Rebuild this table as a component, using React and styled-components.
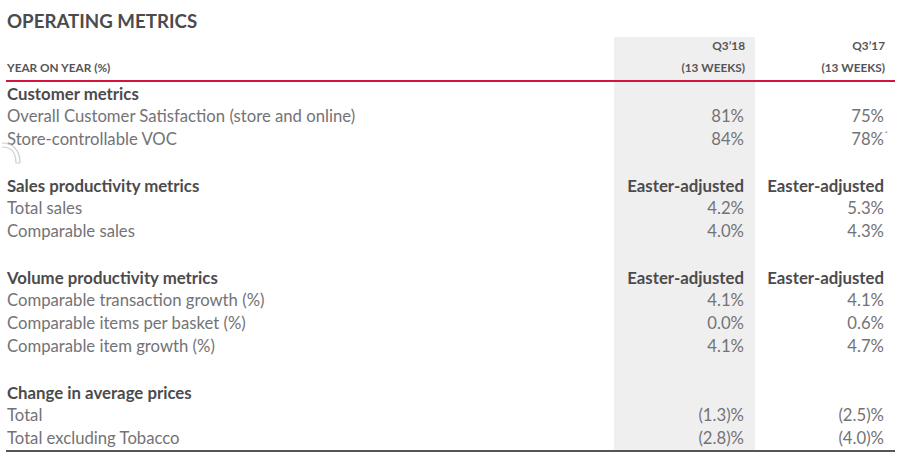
import React from 'react';
import styled, { createGlobalStyle } from 'styled-components';

const GlobalStyle = createGlobalStyle`
  html, body { margin: 0; padding: 0; background: #ffffff; }
  body { font-family: Lato, "Open Sans", sans-serif; }
`;

const Page = styled.div`
  width: 905px;
  height: 460px;
  position: relative;
  box-sizing: border-box;
  padding: 0 10px 0 6px;
  overflow: hidden;
`;

const Title = styled.h1`
  margin: 0;
  height: 37px;
  padding: 10px 0 0 1px;
  box-sizing: border-box;
  font-size: 18.7px;
  font-weight: 700;
  color: #4b4b4d;
  line-height: 22px;
`;

const Grid = styled.div`
  display: grid;
  grid-template-columns: 1fr 141px 140px;
  border-bottom: 2px solid #555555;
`;

const HeadCell = styled.div`
  height: 45px;
  box-sizing: border-box;
  border-bottom: 2px solid #d3143d;
  display: flex;
  flex-direction: column;
  justify-content: flex-end;
  align-items: ${p => (p.$left ? 'flex-start' : 'flex-end')};
  padding: 0 ${p => (p.$left ? '0' : '10px')} 1px ${p => (p.$left ? '1px' : '0')};
  background: ${p => (p.$shade ? '#efefef' : 'transparent')};
  font-size: 11.8px;
  font-weight: 700;
  color: #555558;
  line-height: 22px;
`;

const Cell = styled.div`
  height: 23px;
  line-height: 23px;
  font-size: ${p => (p.$bold ? '16.8px' : '16.7px')};
  font-weight: ${p => (p.$bold ? 700 : 400)};
  color: ${p => (p.$bold ? '#4b4b4d' : '#737376')};
  text-align: ${p => (p.$left ? 'left' : 'right')};
  padding: ${p => (p.$left ? '0 0 0 1px' : '0 11px 0 0')};
  background: ${p => (p.$shade ? '#efefef' : 'transparent')};
  white-space: nowrap;
  position: relative;
`;

const Star = styled.span`
  position: absolute;
  right: 7px;
  top: -5px;
  font-size: 8px;
  color: #9a9a9a;
`;

const Curl = styled.svg`
  position: absolute;
  left: 0;
  top: 139px;
  width: 24px;
  height: 26px;
`;

const rows = [
  ['Customer metrics', '', '', true],
  ['Overall Customer Satisfaction (store and online)', '81%', '75%'],
  ['Store-controllable VOC', '84%', '78%', false, true],
  ['', '', ''],
  ['Sales productivity metrics', 'Easter-adjusted', 'Easter-adjusted', true],
  ['Total sales', '4.2%', '5.3%'],
  ['Comparable sales', '4.0%', '4.3%'],
  ['', '', ''],
  ['Volume productivity metrics', 'Easter-adjusted', 'Easter-adjusted', true],
  ['Comparable transaction growth (%)', '4.1%', '4.1%'],
  ['Comparable items per basket (%)', '0.0%', '0.6%'],
  ['Comparable item growth (%)', '4.1%', '4.7%'],
  ['', '', ''],
  ['Change in average prices', '', '', true],
  ['Total', '(1.3)%', '(2.5)%'],
  ['Total excluding Tobacco', '(2.8)%', '(4.0)%'],
];

export default function App() {
  return (
    <Page>
      <GlobalStyle />
      <Title>OPERATING METRICS</Title>
      <Grid>
        <HeadCell $left>YEAR ON YEAR (%)</HeadCell>
        <HeadCell $shade>
          <span>Q3’18</span>
          <span>(13 WEEKS)</span>
        </HeadCell>
        <HeadCell>
          <span>Q3’17</span>
          <span>(13 WEEKS)</span>
        </HeadCell>
        {rows.map(([label, a, b, bold, star], i) => (
          <React.Fragment key={i}>
            <Cell $left $bold={bold}>{label}</Cell>
            <Cell $shade $bold={bold}>{a}</Cell>
            <Cell $bold={bold}>
              {b}
              {star && <Star>*</Star>}
            </Cell>
          </React.Fragment>
        ))}
      </Grid>
      <Curl viewBox="0 0 24 26">
        <path d="M2 4 C12 4 20 10 20 24 L16 24 C16 12 10 8 2 8" fill="none" stroke="#cfcfcf" strokeWidth="1.2" />
      </Curl>
    </Page>
  );
}
